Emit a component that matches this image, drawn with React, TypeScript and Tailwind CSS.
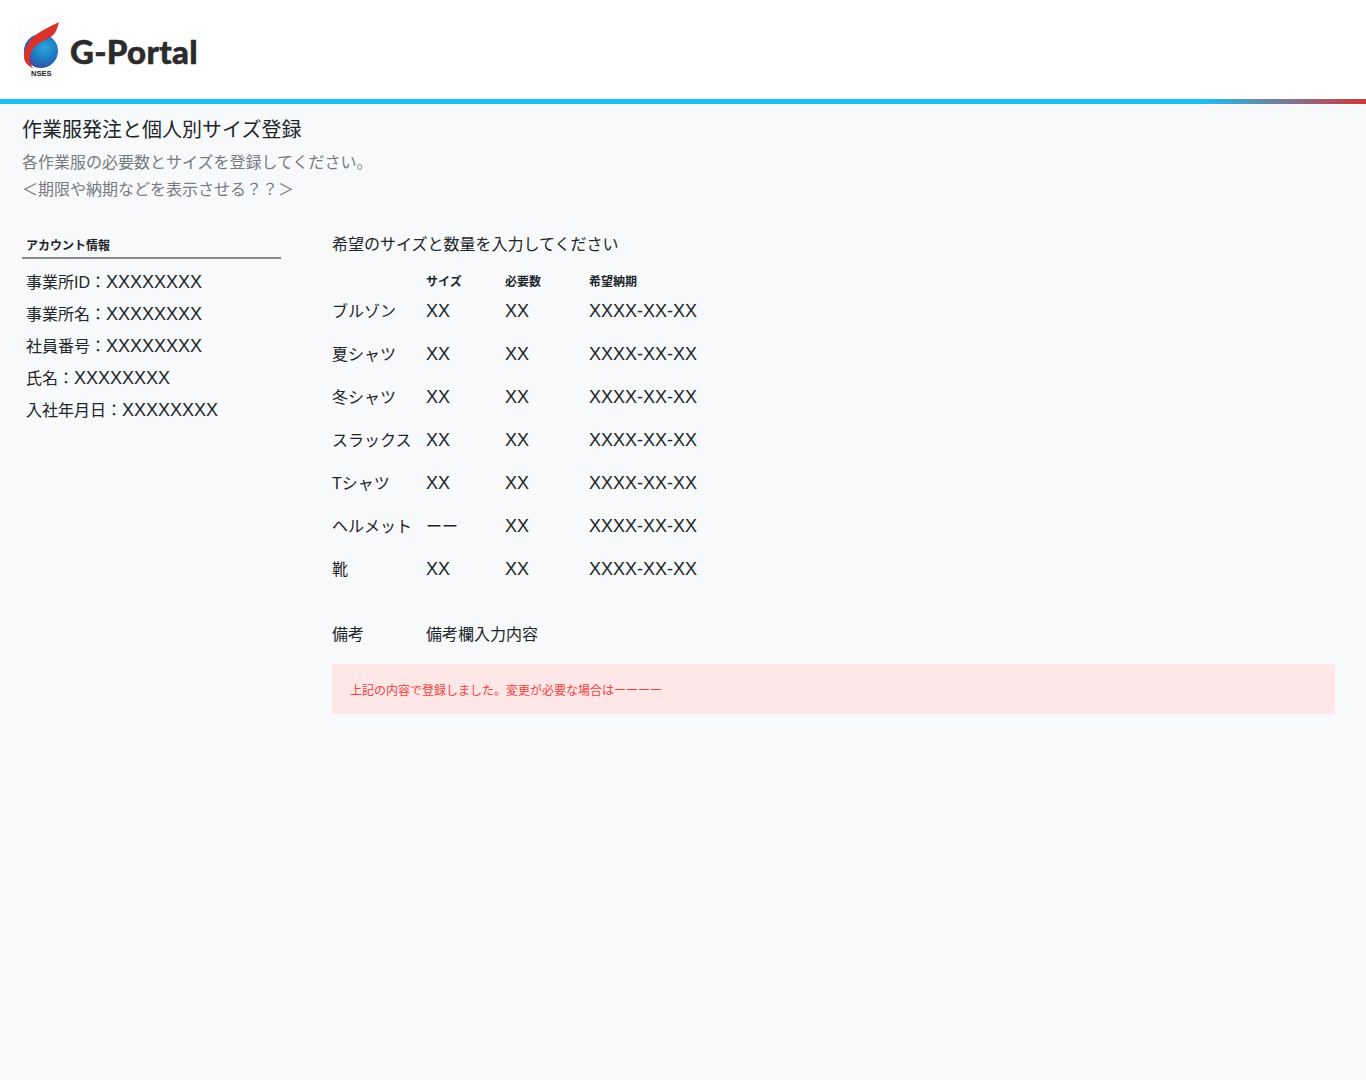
import React from 'react';

const FONT = "font-['Liberation_Sans','Noto_Sans_CJK_JP',sans-serif]";

const accountRows = [
  { label: '事業所', latin: 'ID' },
  { label: '事業所名' },
  { label: '社員番号' },
  { label: '氏名' },
  { label: '入社年月日' },
];

const itemRows = [
  { name: 'ブルゾン', size: 'XX' },
  { name: '夏シャツ', size: 'XX' },
  { name: '冬シャツ', size: 'XX' },
  { name: 'スラックス', size: 'XX' },
  { name: 'シャツ', prefix: 'T', size: 'XX' },
  { name: 'ヘルメット', size: 'ーー' },
  { name: '靴', size: 'XX' },
];

// Latin runs in the reference are wider than the kana size
const Latin = ({ children }: { children: React.ReactNode }) => (
  <span className="text-[18px] leading-none">{children}</span>
);

const Logo = () => (
  <div className="relative w-[48px] h-[64px] bg-[#fdfdfd]">
    <svg width="48" height="64" viewBox="0 0 48 64">
      <defs>
        <radialGradient id="globe" cx="0.6" cy="0.4" r="0.72">
          <stop offset="0" stopColor="#2ba6e0" />
          <stop offset="0.55" stopColor="#1d76c0" />
          <stop offset="1" stopColor="#4a3a92" />
        </radialGradient>
      </defs>
      <circle cx="24" cy="33" r="17" fill="url(#globe)" />
      <path d="M42 4 C32 9 18 15 12 24 C9 29 7 34 7 39 C7 44 11 48 16 50 C13 46 12 40 14 35 C16 29 22 25 28 22 C32 20 36 18 38 15 C40 11 41 8 42 4 Z" fill="#d8322c" />
    </svg>
    <span className="absolute left-[14px] top-[51px] text-[7.5px] leading-[9px] font-bold text-[#222]">NSES</span>
  </div>
);

export default function App() {
  return (
    <div className={`min-h-[1080px] bg-[#f8f9fb] text-[#212529] ${FONT}`}>
      <header className="h-[99px] bg-white flex items-center pl-[17px] gap-[5px]">
        <Logo />
        <span className="font-['Lato',sans-serif] font-black text-[33px] tracking-[0.3px] leading-none text-[#2b2b2b] mt-[3px] [-webkit-text-stroke:0.5px_#2b2b2b]">G-Portal</span>
      </header>
      <div className="h-[5px] bg-[linear-gradient(to_right,#1dbff0_0%,#1dbff0_88%,#d2363a_100%)]" />

      <div className="pl-[22px] pr-[31px] pt-[11px]">
        <h1 className="text-[20px] leading-[30px] font-normal">作業服発注と個人別サイズ登録</h1>
        <p className="text-[16px] leading-[27px] text-[#777b80] mt-[4px]">各作業服の必要数とサイズを登録してください。</p>
        <p className="text-[16px] leading-[27px] text-[#777b80]">＜期限や納期などを表示させる？？＞</p>

        <div className="flex gap-[51px] mt-[30px]">
          <aside className="w-[259px] shrink-0">
            <h2 className="text-[12px] leading-[18px] font-bold px-[4px] pb-[2px] border-b-2 border-[#8a8a8e] mt-[4px]">アカウント情報</h2>
            <ul className="mt-[8px] px-[4px]">
              {accountRows.map((row) => (
                <li key={row.label} className="text-[16px] leading-[32px] whitespace-nowrap">
                  {row.label}
                  {row.latin}：<Latin>XXXXXXXX</Latin>
                </li>
              ))}
            </ul>
          </aside>

          <main className="flex-1">
            <p className="text-[16px] leading-[24px]">希望のサイズと数量を入力してください</p>
            <div className="grid grid-cols-[94px_79px_84px_1fr] mt-[13px]">
              <div />
              <div className="text-[12px] leading-[24px] font-bold">サイズ</div>
              <div className="text-[12px] leading-[24px] font-bold">必要数</div>
              <div className="text-[12px] leading-[24px] font-bold">希望納期</div>
            </div>
            <div className="grid grid-cols-[94px_79px_84px_1fr] auto-rows-[43px] items-center -mt-[4px]">
              {itemRows.map((row) => (
                <React.Fragment key={row.name}>
                  <div className="text-[16px] whitespace-nowrap">
                    {row.prefix}
                    {row.name}
                  </div>
                  <div className="text-[16px]">{row.size === 'XX' ? <Latin>XX</Latin> : row.size}</div>
                  <div><Latin>XX</Latin></div>
                  <div><Latin>XXXX-XX-XX</Latin></div>
                </React.Fragment>
              ))}
            </div>
            <div className="grid grid-cols-[94px_1fr] text-[16px] leading-[24px] mt-[32px]">
              <div>備考</div>
              <div>備考欄入力内容</div>
            </div>
            <div className="h-[50px] mt-[17px] pt-[4px] bg-[#fee7e6] text-[#f2403c] text-[12px] flex items-center pl-[18px]">
              上記の内容で登録しました。変更が必要な場合はーーーー
            </div>
          </main>
        </div>
      </div>
    </div>
  );
}
